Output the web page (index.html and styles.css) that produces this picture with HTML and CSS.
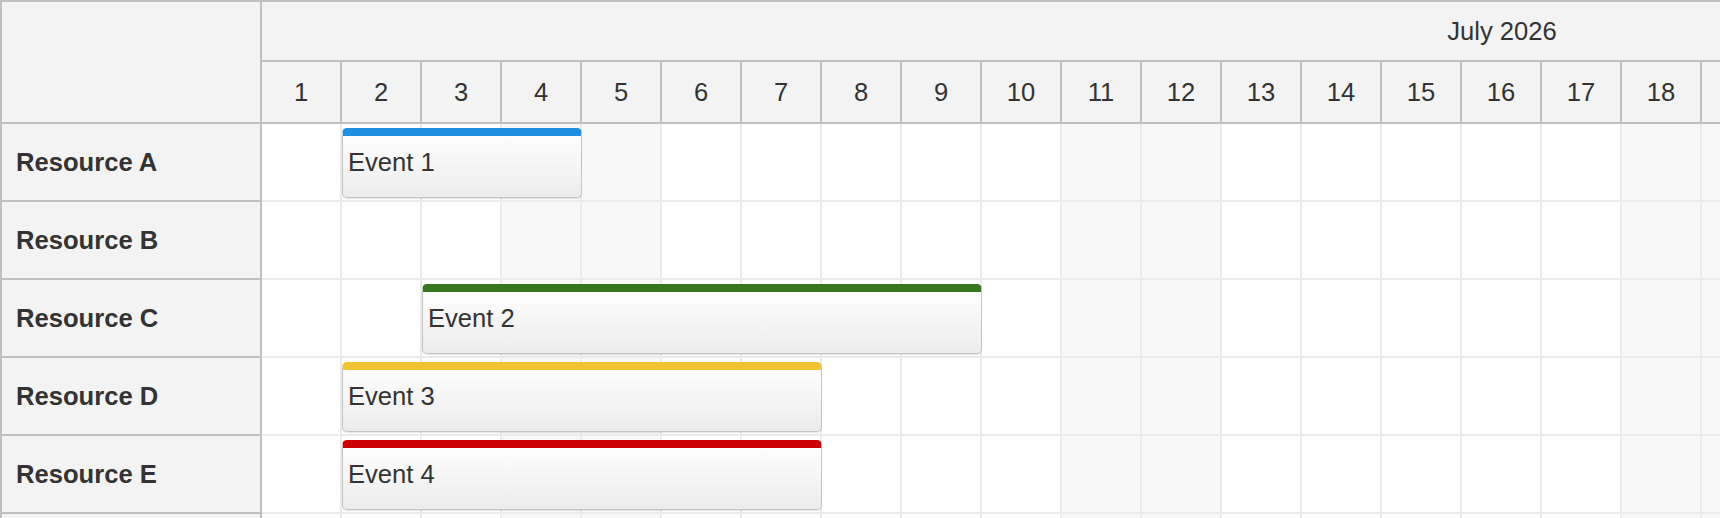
FILE: index.html
```html
<!DOCTYPE html>
<html lang="en">
<head>
    <meta charset="UTF-8">
    <meta name="viewport" content="width=device-width, initial-scale=1.0">
    <title>Scheduler</title>
    <link rel="stylesheet" href="styles.css">
</head>
<body>
    <div class="scheduler">
        <div class="resources">
            <div class="corner"></div>
            <div class="resource">Resource A</div>
            <div class="resource">Resource B</div>
            <div class="resource">Resource C</div>
            <div class="resource">Resource D</div>
            <div class="resource">Resource E</div>
            <div class="resource"></div>
        </div>

        <div class="timeline">
            <div class="month">July 2026</div>
            <div class="days" id="days"></div>
            <div class="lanes" id="lanes"></div>
        </div>
    </div>

    <script>
        const DAYS = 31;
        const CELL = 80;
        const resourceCount = 6;

        const events = [
            { resource: 0, start: 2, days: 3, text: 'Event 1', color: '#1f8fe2' },
            { resource: 2, start: 3, days: 7, text: 'Event 2', color: '#38761d' },
            { resource: 3, start: 2, days: 6, text: 'Event 3', color: '#f1c232' },
            { resource: 4, start: 2, days: 6, text: 'Event 4', color: '#cc0000' }
        ];

        // Saturdays and Sundays get a shaded column
        function isWeekend(day) {
            const dow = new Date(2026, 6, day).getDay();
            return dow === 0 || dow === 6;
        }

        // Day header
        const daysRow = document.getElementById('days');
        for (let d = 1; d <= DAYS; d++) {
            const cell = document.createElement('div');
            cell.className = 'day';
            cell.textContent = d;
            daysRow.appendChild(cell);
        }

        // Resource lanes
        const lanes = document.getElementById('lanes');
        for (let r = 0; r < resourceCount; r++) {
            const lane = document.createElement('div');
            lane.className = 'lane';
            for (let d = 1; d <= DAYS; d++) {
                const cell = document.createElement('div');
                cell.className = isWeekend(d) ? 'cell weekend' : 'cell';
                lane.appendChild(cell);
            }
            lanes.appendChild(lane);
        }

        // Events
        events.forEach(ev => {
            const box = document.createElement('div');
            box.className = 'event';
            box.textContent = ev.text;
            box.style.left = ((ev.start - 1) * CELL) + 'px';
            box.style.width = (ev.days * CELL) + 'px';
            box.style.borderTopColor = ev.color;
            lanes.children[ev.resource].appendChild(box);
        });
    </script>
</body>
</html>
```

FILE: styles.css
```css
* {
    margin: 0;
    padding: 0;
    box-sizing: border-box;
}

body {
    font-family: "Liberation Sans", Arial, sans-serif;
    color: #333;
    background-color: #fff;
    overflow: hidden;
}

.scheduler {
    display: flex;
    width: max-content;
    border-top: 2px solid #c0c0c0;
    border-left: 2px solid #c0c0c0;
}

/* Resource column */
.resources {
    flex: none;
    width: 260px;
    background-color: #f3f3f3;
    border-right: 2px solid #c0c0c0;
}

.corner {
    height: 122px;
    border-bottom: 2px solid #c0c0c0;
}

.resource {
    height: 78px;
    display: flex;
    align-items: center;
    padding-left: 14px;
    font-size: 25.6px;
    font-weight: bold;
    border-bottom: 2px solid #c0c0c0;
}

/* Timeline */
.timeline {
    flex: none;
    width: 2480px;
}

.month {
    height: 60px;
    display: flex;
    align-items: center;
    justify-content: center;
    font-size: 25.6px;
    background-color: #f3f3f3;
    border-bottom: 2px solid #c0c0c0;
}

.days {
    height: 62px;
    display: grid;
    grid-template-columns: repeat(31, 80px);
    background-color: #f3f3f3;
    border-bottom: 2px solid #c0c0c0;
}

.day {
    display: flex;
    align-items: center;
    justify-content: center;
    font-size: 25.6px;
    border-right: 2px solid #c0c0c0;
}

.lane {
    position: relative;
    height: 78px;
    display: grid;
    grid-template-columns: repeat(31, 80px);
}

.cell {
    border-right: 2px solid #ebebeb;
    border-bottom: 2px solid #ebebeb;
}

.cell.weekend {
    background-color: #f8f8f8;
}

/* Event boxes */
.event {
    position: absolute;
    top: 4px;
    height: 70px;
    display: flex;
    align-items: center;
    padding: 0 5px 8px;
    font-size: 25.6px;
    background: linear-gradient(#fdfdfd, #ececec);
    border: 1px solid #c4c4c4;
    border-top: 8px solid #1f8fe2;
    border-radius: 5px;
    box-shadow: 0 1px 1px rgba(0, 0, 0, 0.1);
}
```
